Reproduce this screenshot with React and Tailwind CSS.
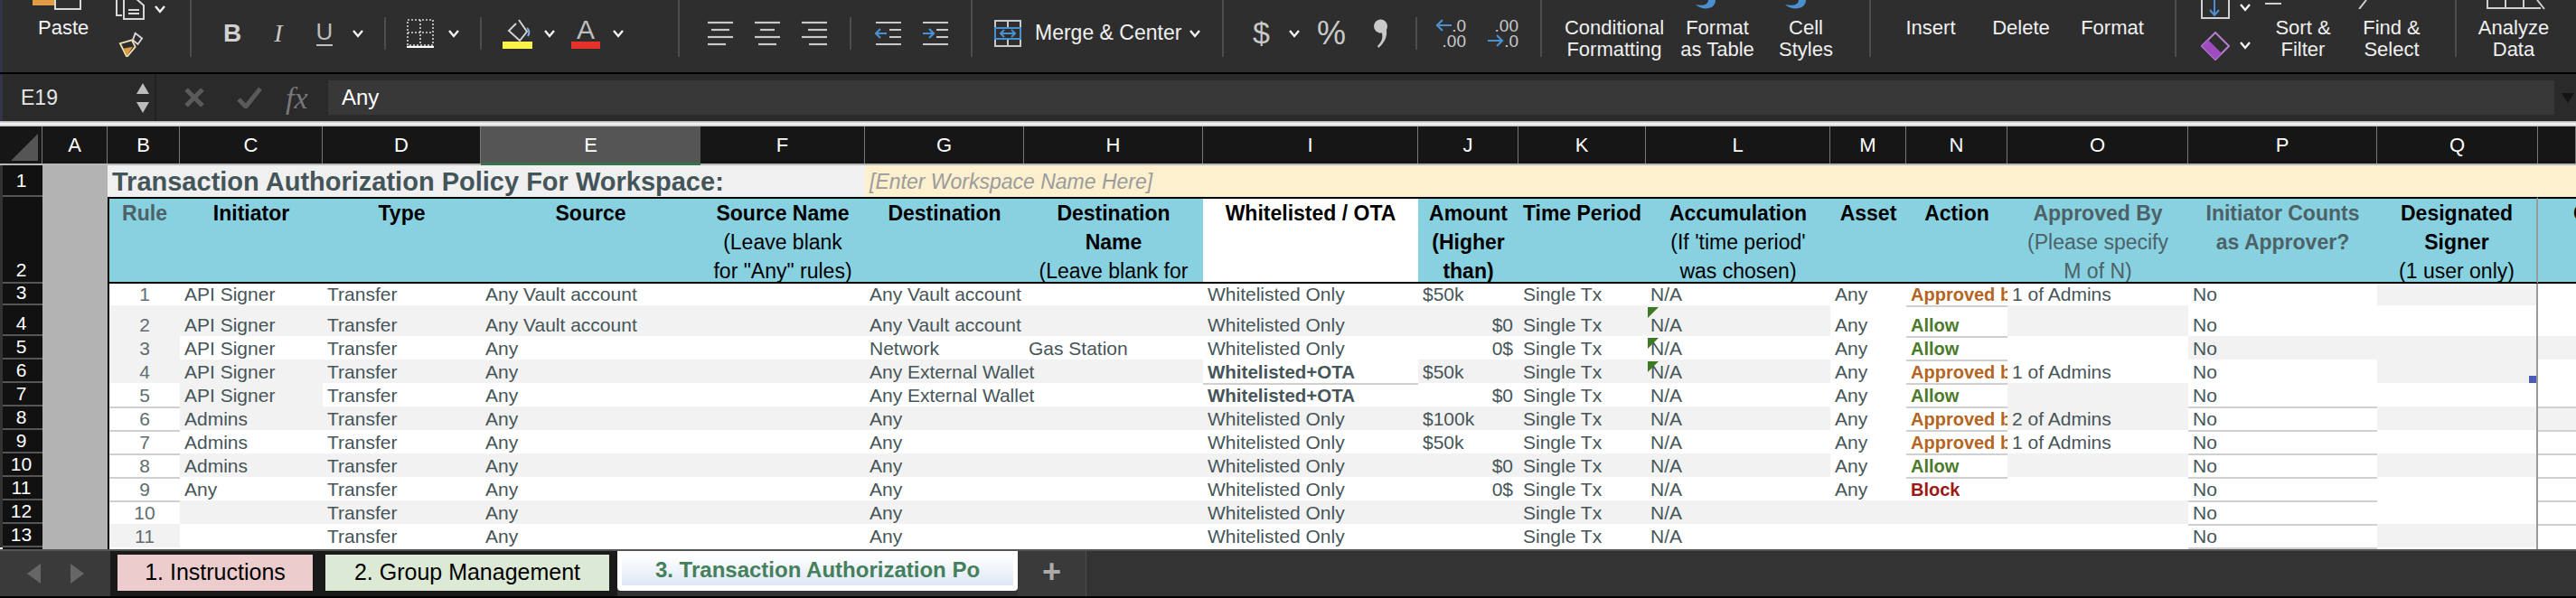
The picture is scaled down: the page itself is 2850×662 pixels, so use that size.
import { Fragment } from 'react'

const COLS = 'BCDEFGHIJKLMNOPQR'.split('')
const GRID = 'grid grid-rows-[100%] grid-cols-[47px_72px_80px_158px_175px_243px_182px_176px_198px_238px_111px_141px_204px_84px_112px_200px_209px_178px_42px]'

const ALLOW = { t: 'Allow', c: 'font-bold text-[20px] text-[#4b7a2a]' }
const APPROVED = { t: 'Approved by', c: 'font-bold text-[20px] text-[#b4651f]' }
const BLOCK = { t: 'Block', c: 'font-bold text-[20px] text-[#9c1a15]' }
const OTA = { t: 'Whitelisted+OTA', c: 'font-bold text-[20.5px]' }
const WL = 'Whitelisted Only'

const rows = [
  { n: 3, h: 'h-[24px]', gray: 'Q', lines: '', v: { B: '1', C: 'API Signer', D: 'Transfer', E: 'Any Vault account', G: 'Any Vault account', I: WL, J: '$50k', K: 'Single Tx', L: 'N/A', M: 'Any', N: APPROVED, O: '1 of Admins', P: 'No' } },
  { n: 4, h: 'h-[34px]', gray: 'BCDEFGHIJKLO', lines: 'N', flag: true, v: { B: '2', C: 'API Signer', D: 'Transfer', E: 'Any Vault account', G: 'Any Vault account', I: WL, R0: '$0', K: 'Single Tx', L: 'N/A', M: 'Any', N: ALLOW, P: 'No' } },
  { n: 5, h: 'h-[26px]', gray: 'BPQR', lines: 'N', flag: true, v: { B: '3', C: 'API Signer', D: 'Transfer', E: 'Any', G: 'Network', H: 'Gas Station', I: WL, R0: '0$', K: 'Single Tx', L: 'N/A', M: 'Any', N: ALLOW, P: 'No' } },
  { n: 6, h: 'h-[26px]', gray: 'BCDEFGHJKLQ', lines: 'N', flag: true, mark: true, v: { B: '4', C: 'API Signer', D: 'Transfer', E: 'Any', G: 'Any External Wallet', I: OTA, J: '$50k', K: 'Single Tx', L: 'N/A', M: 'Any', N: APPROVED, O: '1 of Admins', P: 'No' } },
  { n: 7, h: 'h-[26px]', gray: 'CO', lines: 'IN', v: { B: '5', C: 'API Signer', D: 'Transfer', E: 'Any', G: 'Any External Wallet', I: OTA, R0: '$0', K: 'Single Tx', L: 'N/A', M: 'Any', N: ALLOW, P: 'No' } },
  { n: 8, h: 'h-[26px]', gray: 'CDEFGHIJKLOQR', lines: 'BNPR', v: { B: '6', C: 'Admins', D: 'Transfer', E: 'Any', G: 'Any', I: WL, J: '$100k', K: 'Single Tx', L: 'N/A', M: 'Any', N: APPROVED, O: '2 of Admins', P: 'No' } },
  { n: 9, h: 'h-[26px]', gray: '', lines: 'BNPR', v: { B: '7', C: 'Admins', D: 'Transfer', E: 'Any', G: 'Any', I: WL, J: '$50k', K: 'Single Tx', L: 'N/A', M: 'Any', N: APPROVED, O: '1 of Admins', P: 'No' } },
  { n: 10, h: 'h-[26px]', gray: 'CDEFGHIJKLOQ', lines: 'BNPR', v: { B: '8', C: 'Admins', D: 'Transfer', E: 'Any', G: 'Any', I: WL, R0: '$0', K: 'Single Tx', L: 'N/A', M: 'Any', N: ALLOW, P: 'No' } },
  { n: 11, h: 'h-[26px]', gray: '', lines: 'BNPR', v: { B: '9', C: 'Any', D: 'Transfer', E: 'Any', G: 'Any', I: WL, R0: '0$', K: 'Single Tx', L: 'N/A', M: 'Any', N: BLOCK, P: 'No' } },
  { n: 12, h: 'h-[26px]', gray: 'CDEFGHIJKLMNO', lines: 'BPR', v: { B: '10', D: 'Transfer', E: 'Any', G: 'Any', I: WL, K: 'Single Tx', L: 'N/A', P: 'No' } },
  { n: 13, h: 'h-[26px]', gray: 'BQ', lines: 'PR', v: { B: '11', D: 'Transfer', E: 'Any', G: 'Any', I: WL, K: 'Single Tx', L: 'N/A', P: 'No' } },
]

const headers = [
  { k: 'B', gray: true, lines: [['Rule', 1]] },
  { k: 'C', lines: [['Initiator', 1]] },
  { k: 'D', lines: [['Type', 1]] },
  { k: 'E', lines: [['Source', 1]] },
  { k: 'F', lines: [['Source Name', 1], ['(Leave blank'], ['for "Any" rules)']] },
  { k: 'G', lines: [['Destination', 1]] },
  { k: 'H', lines: [['Destination', 1], ['Name', 1], ['(Leave blank for']] },
  { k: 'I', white: true, lines: [['Whitelisted / OTA', 1]] },
  { k: 'J', lines: [['Amount', 1], ['(Higher', 1], ['than)', 1]] },
  { k: 'K', lines: [['Time Period', 1]] },
  { k: 'L', lines: [['Accumulation', 1], ["(If 'time period'"], ['was chosen)']] },
  { k: 'M', lines: [['Asset', 1]] },
  { k: 'N', lines: [['Action', 1]] },
  { k: 'O', gray: true, lines: [['Approved By', 1], ['(Please specify'], ['M of N)']] },
  { k: 'P', gray: true, lines: [['Initiator Counts', 1], ['as Approver?', 1]] },
  { k: 'Q', lines: [['Designated', 1], ['Signer', 1], ['(1 user only)']] },
]

function Chev({ className = '' }) {
  return (
    <svg width="14" height="10" viewBox="0 0 14 10" className={`shrink-0 ${className}`} fill="none" stroke="#f2f2f2" strokeWidth="2.4">
      <path d="M2 2l5 6 5-6" />
    </svg>
  )
}

function Divider({ className = '' }) {
  return <span className={`h-[36px] w-[2px] shrink-0 bg-[#4d4d4d] ${className}`} />
}

function AlignIcon({ widths }) {
  return (
    <svg width="30" height="28" viewBox="0 0 30 28" stroke="#c9c9c9" strokeWidth="2.2">
      {widths.map(([a, b], i) => (
        <path key={i} d={`M${a} ${2 + i * 8}H${b}`} />
      ))}
    </svg>
  )
}

function IndentIcon({ right }) {
  return (
    <svg width="30" height="28" viewBox="0 0 30 28" fill="none" strokeWidth="2.2">
      <path d="M1 2H29M16 10H29M16 18H29M1 26H29" stroke="#c9c9c9" />
      <path d={right ? 'M1 14H13M8 9l5 5-5 5' : 'M13 14H1M6 9l-5 5 5 5'} stroke="#4a90d0" />
    </svg>
  )
}

function DecimalIcon({ more }) {
  const arrow = (
    <svg width="18" height="14" viewBox="0 0 18 14" fill="none" stroke="#4a90d0" strokeWidth="2.2">
      <path d={more ? 'M0 7H16M10 1l6 6-6 6' : 'M18 7H2M8 1L2 7l6 6'} />
    </svg>
  )
  return (
    <div className="flex w-[32px] flex-col items-end text-[19px] leading-[17px] text-[#c9c9c9]">
      {more ? (
        <>
          <span>.00</span>
          <span className="flex items-center">{arrow}.0</span>
        </>
      ) : (
        <>
          <span className="flex items-center">{arrow}.0</span>
          <span>.00</span>
        </>
      )}
    </div>
  )
}

function TextButton({ lines, className = '' }) {
  return (
    <div className={`flex shrink-0 flex-col items-center pt-[19px] text-[22px] leading-[24px] text-[#f0f0f0] whitespace-nowrap ${className}`}>
      {lines.map((l) => (
        <span key={l}>{l}</span>
      ))}
    </div>
  )
}

function Ribbon() {
  return (
    <div className="flex h-[80px] bg-[#2e2e2e] border-l-[3px] border-[#33344a]">
      <div className="flex w-[209px] h-[63px] border-r-2 border-[#4d4d4d] overflow-hidden">
        <div className="ml-[33px] w-[68px] flex flex-col items-start">
          <svg width="56" height="11" viewBox="0 0 56 11" fill="none">
            <rect x="0" y="-4" width="24" height="10" fill="#df9c45" />
            <rect x="25" y="-5" width="28" height="15" stroke="#d8d8d8" strokeWidth="2" />
          </svg>
          <span className="mt-[8px] ml-[6px] text-[22px] leading-[24px] text-[#f4f4f4]">Paste</span>
        </div>
        <div className="ml-[24px] flex flex-col gap-[13px]">
          <div className="flex items-start gap-[10px]">
            <svg width="32" height="22" viewBox="0 0 32 22" fill="none" stroke="#d8d8d8" strokeWidth="2">
              <path d="M7 -2H1V17H7M9 -2H22L31 6V21H9Z" />
              <path d="M14 11H26M14 15H26" />
            </svg>
            <Chev className="mt-[5px]" />
          </div>
          <svg width="34" height="30" viewBox="0 0 34 30" fill="none">
            <path d="M22 2l8 6-5 7-6-5z" stroke="#d8d8d8" strokeWidth="2" />
            <path d="M4 14l14-4 4 8-10 12z" stroke="#f2e0b0" strokeWidth="2" />
            <path d="M8 20l11-2-7 11z" fill="#df9c45" />
          </svg>
        </div>
      </div>

      <div className="flex w-[540px] h-[63px] border-r-2 border-[#4d4d4d] items-center pt-[10px]">
        <span className="ml-[32px] w-[26px] font-bold text-[28px] text-[#d0d0d0] text-center">B</span>
        <span className="ml-[25px] w-[26px] italic text-[28px] text-[#c8c8c8] text-center font-['Liberation_Serif',serif]">I</span>
        <div className="ml-[25px] w-[26px] flex flex-col items-center">
          <span className="text-[26px] leading-[25px] text-[#bdbdbd]">U</span>
          <span className="mt-[1px] h-[2px] w-[18px] bg-[#bdbdbd]" />
        </div>
        <Chev className="ml-[17px]" />
        <Divider className="ml-[22px]" />
        <svg className="ml-[23px] shrink-0" width="30" height="32" viewBox="0 0 30 32" fill="none" stroke="#d8d8d8" strokeWidth="1.6" strokeDasharray="2 2">
          <path d="M1 1H29V29H1ZM15 1V29M1 15H29" />
          <path d="M0 31H30" strokeDasharray="none" stroke="#fff" strokeWidth="2.4" />
        </svg>
        <Chev className="ml-[15px]" />
        <Divider className="ml-[22px]" />
        <div className="ml-[23px] flex flex-col items-center w-[33px] shrink-0">
          <svg width="28" height="26" viewBox="0 0 28 26" fill="none">
            <path d="M15 2l9 13-8 10-12-11 8-8" stroke="#d0d0d0" strokeWidth="2" />
            <path d="M24 11c3 2 3 6 1 9" stroke="#7fb2e5" strokeWidth="2" />
          </svg>
          <span className="h-[8px] w-[33px] bg-[#fbf24a]" />
        </div>
        <Chev className="ml-[12px]" />
        <div className="ml-[17px] flex flex-col items-center w-[32px] shrink-0">
          <span className="text-[30px] leading-[26px] text-[#bdbdbd]">A</span>
          <span className="h-[8px] w-[32px] bg-[#e5332a]" />
        </div>
        <Chev className="ml-[13px]" />
      </div>

      <div className="flex w-[324px] h-[63px] border-r-2 border-[#4d4d4d] items-center pt-[10px]">
        <div className="ml-[30px] flex gap-[22px]">
          <AlignIcon widths={[[1, 29], [5, 25], [1, 29], [1, 21]]} />
          <AlignIcon widths={[[1, 29], [7, 23], [1, 29], [5, 25]]} />
          <AlignIcon widths={[[1, 29], [8, 29], [1, 29], [9, 29]]} />
        </div>
        <Divider className="ml-[24px]" />
        <div className="ml-[26px] flex gap-[22px]">
          <IndentIcon />
          <IndentIcon right />
        </div>
      </div>

      <div className="flex w-[278px] h-[63px] border-r-2 border-[#4d4d4d] items-center pt-[10px]">
        <svg className="ml-[24px] shrink-0" width="30" height="30" viewBox="0 0 30 30" fill="none">
          <path d="M1 1H29V29H1ZM15 1V9M15 21V29" stroke="#c9c9c9" strokeWidth="2" />
          <path d="M1 9H29V21H1Z" stroke="#4a90d0" strokeWidth="2" />
          <path d="M7 15H23M11 11l-4 4 4 4M19 11l4 4-4 4" stroke="#4a90d0" strokeWidth="2" />
        </svg>
        <span className="ml-[15px] text-[23px] text-[#f0f0f0] whitespace-nowrap">Merge &amp; Center</span>
        <Chev className="ml-[8px]" />
      </div>

      <div className="flex w-[352px] h-[63px] border-r-2 border-[#4d4d4d] items-center pt-[10px]">
        <span className="ml-[32px] w-[19px] text-[34px] text-[#c9c9c9] text-center">$</span>
        <Chev className="ml-[20px]" />
        <span className="ml-[18px] w-[32px] text-[36px] text-[#c9c9c9]">%</span>
        <svg className="ml-[31px] shrink-0" width="15" height="32" viewBox="0 0 15 32">
          <circle cx="7.5" cy="8" r="7.5" fill="#c9c9c9" />
          <path d="M10 4c7 8 5 20-5 28l-1-2c6-6 7-12 3-18z" fill="#c9c9c9" />
        </svg>
        <Divider className="ml-[31px]" />
        <div className="ml-[22px] shrink-0">
          <DecimalIcon />
        </div>
        <div className="ml-[26px] shrink-0">
          <DecimalIcon more />
        </div>
      </div>

      <div className="flex w-[364px] h-[63px] border-r-2 border-[#4d4d4d] relative">
        <TextButton lines={['Conditional', 'Formatting']} className="ml-[23px] w-[114px]" />
        <TextButton lines={['Format', 'as Table']} className="ml-[12px] w-[90px]" />
        <TextButton lines={['Cell', 'Styles']} className="ml-[18px] w-[70px]" />
        <svg className="absolute left-[168px] top-0" width="26" height="10" viewBox="0 0 26 10"><path d="M16 0c0 5-6 7-14 5 7 7 22 6 22-5z" fill="#4a90d0" /></svg>
        <svg className="absolute left-[267px] top-0" width="27" height="10" viewBox="0 0 27 10"><path d="M17 0c0 5-6 7-15 5 7 7 23 6 23-5z" fill="#4a90d0" /></svg>
      </div>

      <div className="flex w-[338px] h-[63px] border-r-2 border-[#4d4d4d]">
        <TextButton lines={['Insert']} className="ml-[36px] w-[60px]" />
        <TextButton lines={['Delete']} className="ml-[39px] w-[62px]" />
        <TextButton lines={['Format']} className="ml-[35px] w-[70px]" />
      </div>

      <div className="flex w-[310px] h-[63px] border-r-2 border-[#4d4d4d] relative">
        <div className="ml-[27px] w-[56px] shrink-0 flex flex-col gap-[14px]">
          <div className="flex items-start gap-[10px]">
            <svg width="32" height="21" viewBox="0 0 32 21" fill="none">
              <path d="M1 -2V20H31V-2" stroke="#d0d0d0" strokeWidth="2" />
              <path d="M15 0V16M10 11l5 6 5-6" stroke="#4a90d0" strokeWidth="2" />
            </svg>
            <Chev className="mt-[3px]" />
          </div>
          <div className="flex items-start gap-[10px]">
            <svg width="32" height="32" viewBox="0 0 32 32" fill="none">
              <path d="M16 1l15 15-15 15L1 16z" stroke="#b67ed0" strokeWidth="2" />
              <path d="M8 9l15 15-7 7L1 16z" fill="#a04cc0" />
            </svg>
            <Chev className="mt-[10px]" />
          </div>
        </div>
        <TextButton lines={['Sort &', 'Filter']} className="ml-[23px] w-[68px]" />
        <TextButton lines={['Find &', 'Select']} className="ml-[30px] w-[68px]" />
        <span className="absolute left-[98px] top-0 h-[5px] w-[18px] border-b-2 border-[#d0d0d0]" />
        <svg className="absolute left-[198px] top-0" width="14" height="10" viewBox="0 0 14 10" fill="none" stroke="#d0d0d0" strokeWidth="2"><path d="M12 0L4 10" /></svg>
      </div>

      <div className="flex flex-1 h-[63px] relative">
        <TextButton lines={['Analyze', 'Data']} className="ml-[26px] w-[74px]" />
        <svg className="absolute left-[33px] top-0" width="66" height="11" viewBox="0 0 66 11" fill="none" stroke="#d0d0d0" strokeWidth="2">
          <path d="M1 0V9H60M21 0V9M41 0V9M56 0l8 10" />
        </svg>
      </div>
    </div>
  )
}

function FormulaBar() {
  return (
    <div className="flex h-[52px] items-center bg-[#2a2a2a] border-l-[3px] border-[#33344a]">
      <div className="flex w-[170px] h-full items-center justify-between pl-[20px] pr-[6px] border-r-2 border-[#222]">
        <span className="text-[23px] text-[#e6e6e6]">E19</span>
        <div className="flex flex-col gap-[9px]">
          <span className="block w-0 h-0 border-x-[7px] border-x-transparent border-b-[12px] border-b-[#bdbdbd]" />
          <span className="block w-0 h-0 border-x-[7px] border-x-transparent border-t-[12px] border-t-[#bdbdbd]" />
        </div>
      </div>
      <svg className="ml-[31px] shrink-0" width="22" height="22" viewBox="0 0 22 22" stroke="#5a5a5a" strokeWidth="5"><path d="M2 2l18 18M20 2L2 20" /></svg>
      <svg className="ml-[36px] shrink-0" width="28" height="24" viewBox="0 0 28 24" fill="none" stroke="#5a5a5a" strokeWidth="5"><path d="M2 14l8 8L26 2" /></svg>
      <span className="ml-[26px] w-[36px] italic text-[34px] text-[#777] font-['Liberation_Serif',serif]">fx</span>
      <div className="ml-[11px] flex h-[38px] w-[2463px] shrink-0 items-center bg-[#383838] pl-[15px] text-[24px] text-white">Any</div>
      <span className="ml-[8px] block w-0 h-0 border-x-[7px] border-x-transparent border-t-[11px] border-t-[#141414]" />
    </div>
  )
}

function ColumnHeaders() {
  return (
    <div className={`${GRID} h-[43px] border-b-2 border-[#b8b8b8] bg-[#161616]`}>
      <div className="relative border-r border-[#777]">
        <span className="absolute left-[12px] top-[8px] w-0 h-0 border-l-[30px] border-l-transparent border-b-[30px] border-b-[#555]" />
      </div>
      {['A', ...COLS].map((c) => (
        <div
          key={c}
          className={`flex items-center justify-center text-[22px] text-white ${
            c === 'E' ? 'bg-[#555555] border-b-[3px] border-[#39714a] -mb-[2px]' : 'border-r border-[#777]'
          }`}
        >
          {c === 'R' ? '' : c}
        </div>
      ))}
    </div>
  )
}

function RowHead({ n, className = '' }) {
  return (
    <div className={`ml-[3px] flex items-end justify-center bg-[#111] border-b-2 border-[#555] pr-[3px] text-[21px] text-white ${className}`}>
      {n}
    </div>
  )
}

function Cell({ col, row }) {
  const raw = row.v[col] ?? (col === 'J' ? row.v.R0 : undefined)
  const item = typeof raw === 'string' ? { t: raw, c: '' } : raw
  const bg = row.gray.includes(col) ? 'bg-[#f2f2f2]' : 'bg-white'
  const line = row.lines.includes(col) ? 'shadow-[inset_0_2px_0_#d0d0d0]' : ''
  const align =
    col === 'B'
      ? 'justify-center'
      : col === 'J' && row.v.R0
        ? 'justify-end pr-[6px]'
        : 'pl-[5px]'
  return (
    <div
      className={`relative flex items-end whitespace-nowrap leading-[24px] ${bg} ${line} ${align} ${
        col === 'B' ? 'border-l-2 border-black text-[#5f6d70]' : ''
      } ${col === 'Q' ? 'border-r-2 border-[#999]' : ''} ${col === 'N' ? 'overflow-hidden' : ''} ${col === 'G' ? 'z-[1]' : ''}`}
    >
      {item && <span className={item.c}>{item.t}</span>}
      {col === 'L' && row.flag && (
        <span className="absolute left-[2px] top-[2px] w-0 h-0 border-r-[12px] border-r-transparent border-t-[12px] border-t-[#3c7a24]" />
      )}
      {col === 'Q' && row.mark && <span className="absolute right-0 bottom-0 h-[8px] w-[8px] bg-[#4a5cb5]" />}
    </div>
  )
}

function Sheet() {
  return (
    <div className="flex flex-col text-[21px] text-[#465558]">
      <div className={`${GRID} h-[35px]`}>
        <RowHead n={1} className="leading-[33px]" />
        <div className="bg-[#b3b3b3]" />
        <div className="col-span-5 flex items-center bg-[#f0f0f0] pl-[5px] pt-[2px] font-bold text-[29px] text-[#44555a] whitespace-nowrap">
          Transaction Authorization Policy For Workspace:
        </div>
        <div className="col-span-12 flex items-center bg-[#fcf0cf] pl-[5px] pt-[2px] italic text-[23px] text-[#9b9b9b]">
          [Enter Workspace Name Here]
        </div>
      </div>
      <div className={`${GRID} h-[96px]`}>
        <RowHead n={2} className="leading-[26px]" />
        <div className="bg-[#b3b3b3]" />
        {headers.map((h) => (
          <div
            key={h.k}
            className={`flex flex-col items-center overflow-hidden border-y-2 border-black leading-[32px] text-[23px] whitespace-nowrap ${
              h.white ? 'bg-white' : 'bg-[#87d1e0]'
            } ${h.gray ? 'text-[#4d6166]' : 'text-black'} ${h.k === 'B' ? 'border-l-2' : ''} ${
              h.k === 'Q' ? 'border-r-2 border-r-[#999]' : ''
            }`}
          >
            {h.lines.map(([t, bold]) => (
              <span key={t} className={bold ? 'font-bold' : ''}>
                {t}
              </span>
            ))}
          </div>
        ))}
        <div className="overflow-hidden border-y-2 border-black bg-[#87d1e0] pl-[39px] leading-[32px] text-[23px] font-bold text-black">
          C
        </div>
      </div>
      {rows.map((row) => (
        <div key={row.n} className={`${GRID} ${row.h}`}>
          <RowHead n={row.n} className="leading-[24px]" />
          <div className="bg-[#b3b3b3]" />
          {COLS.map((c) => (
            <Fragment key={c}>
              <Cell col={c} row={row} />
            </Fragment>
          ))}
        </div>
      ))}
      <div className={`${GRID} h-[2px] bg-white`}>
        <div className="ml-[3px] bg-[#111]" />
        <div className="bg-[#b3b3b3]" />
        {COLS.map((c) => (
          <div
            key={c}
            className={`${c === 'P' ? 'bg-[#d0d0d0]' : ''} ${c === 'B' ? 'border-l-2 border-black' : ''} ${
              c === 'Q' ? 'border-r-2 border-[#999]' : ''
            }`}
          />
        ))}
      </div>
    </div>
  )
}

function Tabs() {
  return (
    <div className="flex h-[54px] border-t-2 border-[#555] bg-[#333] border-b-2 border-b-black">
      <div className="flex w-[122px] items-center justify-center gap-[33px] bg-[#3a3a3a]">
        <span className="w-0 h-0 border-y-[11px] border-y-transparent border-r-[15px] border-r-[#666]" />
        <span className="w-0 h-0 border-y-[11px] border-y-transparent border-l-[15px] border-l-[#666]" />
      </div>
      <div className="flex w-[561px] items-start gap-[14px] bg-[#1a1a1a] pl-[8px] pt-[4px] text-[25px] text-black">
        <div className="flex h-[40px] w-[216px] items-center justify-center bg-[#eccccc]">1. Instructions</div>
        <div className="flex h-[40px] w-[314px] items-center justify-center bg-[#dce9d5]">2. Group Management</div>
      </div>
      <div className="flex h-[44px] w-[443px] items-start justify-center rounded-b-[4px] bg-white px-[5px] pt-[4px]">
        <div className="flex h-[34px] w-full items-center justify-center bg-gradient-to-b from-white to-[#dfe7f5] text-[24px] font-bold text-[#44805a] whitespace-nowrap">
          3. Transaction Authorization Po
        </div>
      </div>
      <div className="flex w-[76px] items-center justify-center bg-[#3a3a3a] border-r border-[#4d4d4d] pb-[4px] text-[36px] font-bold leading-none text-[#aaa]">
        +
      </div>
    </div>
  )
}

export default function App() {
  return (
    <div className="flex h-[662px] w-[2850px] flex-col overflow-hidden bg-[#333] font-['Liberation_Sans',Arial,sans-serif]">
      <Ribbon />
      <div className="h-[2px] bg-black" />
      <FormulaBar />
      <div className="h-[6px] bg-gradient-to-b from-[#aaa] via-white to-[#bbb]" />
      <ColumnHeaders />
      <Sheet />
      <Tabs />
    </div>
  )
}
